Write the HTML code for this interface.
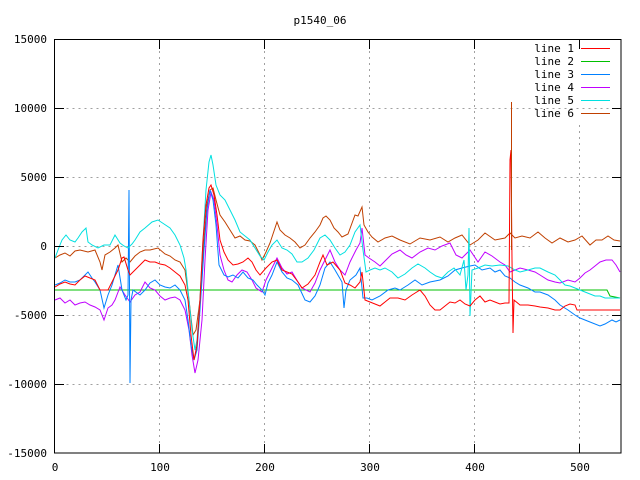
<!DOCTYPE html>
<html><head><meta charset="utf-8"><style>
html,body{margin:0;padding:0;background:#fff;}
svg{display:block;font-family:"DejaVu Sans Mono","Liberation Mono",monospace;}
</style></head><body>
<svg width="640" height="480" viewBox="0 0 640 480" xmlns="http://www.w3.org/2000/svg">
<rect width="640" height="480" fill="#fff"/>
<g stroke="#a0a0a0" stroke-width="1" stroke-dasharray="2,4" fill="none">
<line x1="54.5" y1="108.5" x2="621" y2="108.5"/>
<line x1="54.5" y1="177.5" x2="621" y2="177.5"/>
<line x1="54.5" y1="246.5" x2="530" y2="246.5"/>
<line x1="54.5" y1="315.5" x2="621" y2="315.5"/>
<line x1="54.5" y1="384.5" x2="621" y2="384.5"/>
<line x1="159.5" y1="39" x2="159.5" y2="453"/>
<line x1="264.5" y1="39" x2="264.5" y2="453"/>
<line x1="369.5" y1="39" x2="369.5" y2="453"/>
<line x1="474.5" y1="39" x2="474.5" y2="453"/>
<line x1="579.5" y1="125" x2="579.5" y2="453"/>
</g>
<g fill="none" stroke-width="1">
<polyline stroke="#c04000" points="55,258 60,255 65,253 70,256 75,251 80,250 88,252 95,250 100,262 102,270 105,255 110,252 115,248 118,245 122,262 126,258 130,262 135,256 140,252 145,250 150,250 158,248 165,254 170,256 175,260 180,262 185,270 189,300 193,335 196,330 200,300 204,240 207,205 210,190 213,188 216,200 220,215 225,222 230,230 235,238 240,236 245,240 250,241 255,245 260,255 262,260 266,252 270,243 277,222 280,230 285,235 290,238 295,242 300,248 305,245 310,238 315,232 320,225 323,218 326,216 330,220 334,228 338,232 342,237 348,234 355,215 358,216 362,207 364,225 368,232 372,237 378,242 385,238 392,236 400,240 410,244 420,238 430,240 440,237 448,242 455,238 462,235 470,245 478,240 485,233 495,240 505,238 510,233 515,238 522,236 530,238 538,232 545,238 552,243 560,238 568,242 575,240 582,236 590,245 596,240 602,240 608,236 614,240 620,241"/>
<polyline stroke="#00c000" points="55,290 607,290 610,296 620,298"/>
<polyline stroke="#c000ff" points="55,300 60,298 65,303 70,300 75,305 80,303 85,302 90,305 95,307 100,310 104,320 108,308 112,305 115,300 120,287 125,295 130,302 135,295 140,292 145,282 150,288 155,290 160,296 165,300 170,298 175,297 180,300 185,310 189,330 192,355 195,373 198,360 202,320 205,260 208,210 211,192 214,200 217,225 220,255 224,270 228,280 232,282 237,275 242,270 247,272 252,280 256,288 262,292 266,280 272,268 277,258 282,268 287,274 292,272 298,282 302,288 310,292 315,283 320,270 326,258 330,250 335,262 340,270 345,275 350,262 356,250 360,243 362,228 365,255 369,258 375,262 380,266 386,260 392,254 400,250 406,255 412,258 420,252 428,248 435,250 442,246 450,243 456,255 462,258 470,250 478,262 485,252 492,256 500,262 505,265 510,272 515,270 520,268 528,270 535,272 540,275 548,280 555,282 560,283 568,280 575,282 580,278 585,273 590,270 595,266 600,262 606,260 612,260 616,265 620,272"/>
<polyline stroke="#0080ff" points="55,285 60,283 65,280 70,282 75,282 80,280 88,272 92,278 95,282 100,290 104,308 108,295 112,285 118,265 122,290 126,300 128,295 129,190 130,383 131,300 133,290 140,295 145,290 150,283 155,280 160,285 165,287 170,288 175,285 180,290 185,300 188,320 191,345 194,360 197,350 200,310 204,250 207,210 210,190 213,200 216,225 219,265 224,275 228,277 233,275 238,278 243,272 248,278 253,280 257,285 262,290 265,295 268,283 272,275 277,262 282,272 287,278 292,280 298,285 305,300 310,302 315,296 320,285 325,268 330,262 335,270 342,282 344,308 346,290 350,280 356,275 360,268 363,298 367,298 372,300 380,296 388,290 395,288 400,290 408,285 415,280 422,285 430,282 440,280 448,276 455,270 462,268 470,266 475,265 482,270 490,268 495,272 500,270 505,276 510,278 515,282 520,285 528,288 535,292 540,292 548,295 555,300 560,305 568,310 575,315 580,318 590,322 600,326 605,324 612,320 616,322 620,320"/>
<polyline stroke="#00e0e0" points="55,258 58,250 62,240 66,235 70,240 75,242 78,238 82,232 86,228 88,242 92,245 98,248 104,245 110,245 115,235 120,243 124,246 128,248 132,244 135,240 140,232 145,228 152,222 158,220 164,224 170,228 175,235 180,245 184,258 186,270 189,300 192,330 195,350 197,340 200,300 203,240 206,190 209,162 211,155 213,165 216,185 220,195 225,200 230,210 235,220 240,232 245,236 250,240 255,248 260,256 264,260 268,252 272,245 277,240 282,248 287,250 292,254 297,262 302,262 308,258 314,250 320,238 325,235 330,240 335,248 340,255 345,252 350,245 355,232 360,225 363,250 366,272 370,270 375,268 380,270 385,268 392,272 398,278 405,274 412,268 418,264 425,268 430,272 436,276 442,278 448,272 454,268 460,275 464,260 466,290 468,275 469,228 470,316 472,270 478,268 485,265 492,266 500,265 508,266 515,270 520,272 528,270 535,268 540,268 548,272 555,275 560,280 565,285 570,286 575,288 580,290 585,292 590,294 595,296 600,296 605,298 612,298 620,298"/>
<polyline stroke="#ff0000" points="55,287 60,284 65,282 70,284 75,285 80,280 85,276 90,278 95,280 100,290 105,290 108,290 112,282 118,270 122,258 124,257 128,270 130,275 135,270 140,265 145,260 150,262 155,262 160,264 165,265 170,268 175,272 180,276 185,285 188,300 191,335 194,360 197,345 200,300 203,240 206,205 209,188 211,185 214,195 217,215 220,240 224,252 228,260 233,265 238,264 243,262 248,258 252,262 256,270 260,275 266,268 272,262 277,260 282,270 287,272 292,274 298,282 302,288 308,284 315,275 320,262 323,255 327,265 333,262 340,270 345,283 350,285 355,288 360,282 362,272 365,300 370,302 375,304 380,306 385,302 390,298 398,298 405,300 412,295 420,290 425,296 430,305 435,310 440,310 445,306 450,302 455,303 460,300 465,304 470,306 475,300 480,296 485,302 490,300 495,302 500,304 505,303 509,303 510,160 511,150 512,260 513,333 514,300 520,305 528,305 535,306 540,307 548,308 555,310 560,310 565,306 570,304 575,305 577,310 620,310"/>
<line x1="511.5" y1="102" x2="511.5" y2="250" stroke="#c04000"/>
</g>
<rect x="54.5" y="39.5" width="566.5" height="413.5" fill="none" stroke="#000"/>
<g stroke="#000">
<line x1="55" y1="108.5" x2="64" y2="108.5"/><line x1="612" y1="108.5" x2="621" y2="108.5"/>
<line x1="55" y1="177.5" x2="64" y2="177.5"/><line x1="612" y1="177.5" x2="621" y2="177.5"/>
<line x1="55" y1="246.5" x2="64" y2="246.5"/><line x1="612" y1="246.5" x2="621" y2="246.5"/>
<line x1="55" y1="315.5" x2="64" y2="315.5"/><line x1="612" y1="315.5" x2="621" y2="315.5"/>
<line x1="55" y1="384.5" x2="64" y2="384.5"/><line x1="612" y1="384.5" x2="621" y2="384.5"/>
<line x1="159.5" y1="444" x2="159.5" y2="453"/><line x1="159.5" y1="40" x2="159.5" y2="49"/>
<line x1="264.5" y1="444" x2="264.5" y2="453"/><line x1="264.5" y1="40" x2="264.5" y2="49"/>
<line x1="369.5" y1="444" x2="369.5" y2="453"/><line x1="369.5" y1="40" x2="369.5" y2="49"/>
<line x1="474.5" y1="444" x2="474.5" y2="453"/><line x1="474.5" y1="40" x2="474.5" y2="49"/>
<line x1="579.5" y1="444" x2="579.5" y2="453"/><line x1="579.5" y1="40" x2="579.5" y2="49"/>
</g>
<g font-size="11" fill="#000">
<text x="320" y="24" text-anchor="middle">p1540_06</text>
<g text-anchor="end">
<text x="47" y="43">15000</text><text x="47" y="112">10000</text><text x="47" y="181">5000</text>
<text x="47" y="250">0</text><text x="47" y="319">-5000</text><text x="47" y="388">-10000</text><text x="47" y="457">-15000</text>
<text x="574" y="52">line 1</text><text x="574" y="65">line 2</text><text x="574" y="78">line 3</text>
<text x="574" y="91">line 4</text><text x="574" y="104">line 5</text><text x="574" y="117">line 6</text>
</g>
<g text-anchor="middle">
<text x="55" y="471">0</text><text x="160" y="471">100</text><text x="265" y="471">200</text>
<text x="370" y="471">300</text><text x="475" y="471">400</text><text x="580" y="471">500</text>
</g>
</g>
<g stroke-width="1">
<line x1="581" y1="48.5" x2="610" y2="48.5" stroke="#ff0000"/>
<line x1="581" y1="61.5" x2="610" y2="61.5" stroke="#00c000"/>
<line x1="581" y1="74.5" x2="610" y2="74.5" stroke="#0080ff"/>
<line x1="581" y1="87.5" x2="610" y2="87.5" stroke="#c000ff"/>
<line x1="581" y1="100.5" x2="610" y2="100.5" stroke="#00e0e0"/>
<line x1="581" y1="113.5" x2="610" y2="113.5" stroke="#c04000"/>
</g>
</svg>
</body></html>
